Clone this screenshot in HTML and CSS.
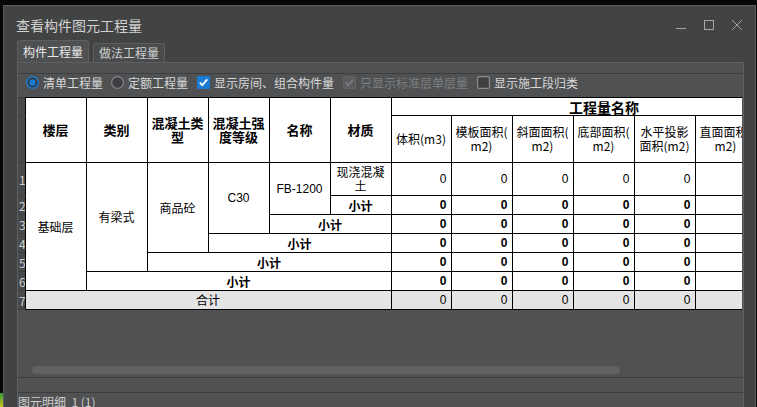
FILE: index.html
```html
<!DOCTYPE html>
<html lang="zh-CN">
<head>
<meta charset="utf-8">
<title>查看构件图元工程量</title>
<link rel="stylesheet" href="styles.css">
</head>
<body>
<div class="window">
  <div class="titlebar">
    <span class="title">查看构件图元工程量</span>
    <div class="controls">
      <svg class="ctl" width="10" height="10" viewBox="0 0 10 10"><line x1="0" y1="8.5" x2="10" y2="8.5"/></svg>
      <svg class="ctl" width="10" height="10" viewBox="0 0 10 10"><rect x="0.5" y="0.5" width="9" height="9"/></svg>
      <svg class="ctl" width="10" height="10" viewBox="0 0 10 10"><line x1="0" y1="0" x2="10" y2="10"/><line x1="10" y1="0" x2="0" y2="10"/></svg>
    </div>
  </div>
  <div class="tabs">
    <div class="tab active">构件工程量</div>
    <div class="tab">做法工程量</div>
  </div>
  <div class="panel">
    <div class="group">
      <div class="toolbar">
        <label class="opt">
          <svg width="13" height="13" viewBox="0 0 13 13"><circle cx="6.5" cy="6.5" r="5.75" fill="#35373a" stroke="#1a7bd4" stroke-width="1.5"/><circle cx="6.5" cy="6.5" r="3.2" fill="#1a7bd4"/></svg>
          <span>清单工程量</span>
        </label>
        <label class="opt">
          <svg width="13" height="13" viewBox="0 0 13 13"><circle cx="6.5" cy="6.5" r="5.9" fill="#3c3e40" stroke="#85878a" stroke-width="1.2"/></svg>
          <span>定额工程量</span>
        </label>
        <label class="opt">
          <svg width="13" height="13" viewBox="0 0 13 13"><rect x="0" y="0" width="13" height="13" rx="1" fill="#1a7ad4"/><path d="M2.8 6.6 L5.3 9.2 L10.2 3.4" fill="none" stroke="#fff" stroke-width="1.8"/></svg>
          <span>显示房间、组合构件量</span>
        </label>
        <label class="opt disabled">
          <svg width="13" height="13" viewBox="0 0 13 13"><rect x="0.5" y="0.5" width="12" height="12" rx="1" fill="#5a5c5e" stroke="#626466"/><path d="M2.8 6.6 L5.3 9.2 L10.2 3.4" fill="none" stroke="#7c7e80" stroke-width="1.6"/></svg>
          <span>只显示标准层单层量</span>
        </label>
        <label class="opt">
          <svg width="13" height="13" viewBox="0 0 13 13"><rect x="0.6" y="0.6" width="11.8" height="11.8" rx="1.5" fill="#3e4042" stroke="#8a8c8e" stroke-width="1.2"/></svg>
          <span>显示施工段归类</span>
        </label>
      </div>
      <div class="grid-area">
        <table class="qty">
          <colgroup>
            <col class="c-rn">
            <col class="c61"><col class="c61"><col class="c61"><col class="c61"><col class="c61"><col class="c61">
            <col class="c60">
            <col class="c61"><col class="c61"><col class="c61"><col class="c61"><col class="c61"><col class="c61">
          </colgroup>
          <tr class="h1">
            <td class="rn"></td>
            <th rowspan="2">楼层</th>
            <th rowspan="2">类别</th>
            <th rowspan="2">混凝土类型</th>
            <th rowspan="2">混凝土强度等级</th>
            <th rowspan="2">名称</th>
            <th rowspan="2">材质</th>
            <th colspan="7" class="grp">工程量名称</th>
          </tr>
          <tr class="h2">
            <td class="rn"></td>
            <th class="sub">体积(m3)</th>
            <th class="sub">模板面积(<br>m2)</th>
            <th class="sub">斜面面积(<br>m2)</th>
            <th class="sub">底部面积(<br>m2)</th>
            <th class="sub">水平投影<br>面积(m2)</th>
            <th class="sub">直面面积(<br>m2)</th>
            <th class="sub">侧面面积(<br>m2)</th>
          </tr>
          <tr class="r1">
            <td class="rn">1</td>
            <td rowspan="6" class="txt">基础层</td>
            <td rowspan="5" class="txt">有梁式</td>
            <td rowspan="4" class="txt">商品砼</td>
            <td rowspan="3" class="txt lat">C30</td>
            <td rowspan="2" class="txt lat">FB-1200</td>
            <td class="txt mat">现浇混凝土</td>
            <td class="v">0</td><td class="v">0</td><td class="v">0</td><td class="v">0</td><td class="v">0</td><td class="v"></td><td class="v"></td>
          </tr>
          <tr class="r">
            <td class="rn">2</td>
            <td class="sum">小计</td>
            <td class="v b">0</td><td class="v b">0</td><td class="v b">0</td><td class="v b">0</td><td class="v b">0</td><td class="v"></td><td class="v"></td>
          </tr>
          <tr class="r">
            <td class="rn">3</td>
            <td colspan="2" class="sum">小计</td>
            <td class="v b">0</td><td class="v b">0</td><td class="v b">0</td><td class="v b">0</td><td class="v b">0</td><td class="v"></td><td class="v"></td>
          </tr>
          <tr class="r">
            <td class="rn">4</td>
            <td colspan="3" class="sum">小计</td>
            <td class="v b">0</td><td class="v b">0</td><td class="v b">0</td><td class="v b">0</td><td class="v b">0</td><td class="v"></td><td class="v"></td>
          </tr>
          <tr class="r">
            <td class="rn">5</td>
            <td colspan="4" class="sum">小计</td>
            <td class="v b">0</td><td class="v b">0</td><td class="v b">0</td><td class="v b">0</td><td class="v b">0</td><td class="v"></td><td class="v"></td>
          </tr>
          <tr class="r">
            <td class="rn">6</td>
            <td colspan="5" class="sum">小计</td>
            <td class="v b">0</td><td class="v b">0</td><td class="v b">0</td><td class="v b">0</td><td class="v b">0</td><td class="v"></td><td class="v"></td>
          </tr>
          <tr class="r total">
            <td class="rn">7</td>
            <td colspan="6" class="txt">合计</td>
            <td class="v">0</td><td class="v">0</td><td class="v">0</td><td class="v">0</td><td class="v">0</td><td class="v"></td><td class="v"></td>
          </tr>
        </table>
      </div>
      <div class="hscroll"><div class="thumb"></div></div>
    </div>
    <div class="band"></div>
    <div class="detail">图元明细&nbsp;&nbsp;1 (1)</div>
  </div>
</div>
</body>
</html>
```

FILE: styles.css
```css
* { box-sizing: border-box; }
html, body { margin: 0; }
body {
  width: 757px;
  height: 407px;
  overflow: hidden;
  padding: 5px 1px 0 3px;
  background: linear-gradient(#2f9a3a, #c9c21f) 0 393px / 3px 14px no-repeat, #060606;
  font-family: "Noto Sans CJK SC", "Noto Sans", sans-serif;
}
.window {
  height: 430px;
  background: #424444;
  border: 1px solid #5b5d5d;
  border-bottom: none;
  display: flex;
  flex-direction: column;
}
.titlebar {
  height: 34px;
  flex: none;
  display: flex;
  align-items: flex-start;
  padding: 10px 13px 0 12px;
}
.title {
  font-size: 14px;
  line-height: 18px;
  color: #d2d2d2;
}
.controls {
  margin-left: auto;
  margin-top: 4px;
  display: flex;
  gap: 18px;
}
.ctl { display: block; stroke: #a4a6a6; stroke-width: 1; fill: none; }
.tabs {
  height: 22px;
  flex: none;
  display: flex;
  align-items: flex-end;
  gap: 4px;
  padding-left: 13px;
}
.tab {
  width: 72px;
  height: 19px;
  border: 1px solid #5c5e60;
  border-bottom: none;
  border-radius: 3px 3px 0 0;
  background: #494b4d;
  color: #d0d0d0;
  font-size: 12px;
  line-height: 18px;
  text-align: center;
}
.tab.active {
  height: 22px;
  line-height: 21px;
  background: #4e5052;
  color: #e8e8e8;
}
.panel {
  flex: 1;
  margin: 0 11px 0 13px;
  border: 1px solid #5d5f61;
  border-bottom: none;
  background: #4f5153;
  padding-top: 10px;
  display: flex;
  flex-direction: column;
}
.group {
  border-top: 1px solid #3b3d3f;
  border-bottom: 1px solid #3a3c3e;
  display: flex;
  flex-direction: column;
}
.toolbar {
  height: 23px;
  display: flex;
  align-items: flex-start;
  gap: 9px;
  padding: 2px 0 0 8px;
}
.opt {
  display: flex;
  align-items: center;
  gap: 4px;
  font-size: 12px;
  line-height: 13px;
  color: #d8d8d8;
  white-space: nowrap;
}
.opt:first-child { margin-right: -1px; }
.opt svg { display: block; flex: none; }
.opt.disabled { color: #7d7f81; }
.grid-area {
  height: 265px;
  width: 724px;
  overflow: hidden;
}
.qty {
  border-collapse: collapse;
  table-layout: fixed;
  width: 799px;
  color: #000;
}
.c-rn { width: 7px; }
.c61 { width: 61px; }
.c60 { width: 60px; }
.qty th, .qty td {
  border: 1px solid #000;
  padding: 0 3px;
  background: #fff;
  text-align: center;
  vertical-align: middle;
  overflow: hidden;
  white-space: normal;
}
.qty th {
  font-size: 13px;
  line-height: 14px;
  font-weight: bold;
}
.qty th.grp { font-size: 14px; }
.qty th.sub {
  font-weight: normal;
  font-size: 12px;
  line-height: 14px;
  padding: 0;
}
.qty td.rn {
  background: #47494b;
  border: 1px solid #3b3d3f;
  border-left: none;
  border-right: 1px solid #000;
  padding: 0 0 0 1px;
  color: #cfcfcf;
  font-size: 12px;
  text-align: left;
  line-height: 13px;
}
.h1 { height: 18px; }
.h2 { height: 47px; }
.r1 { height: 33px; }
.r { height: 19px; }
.qty td.txt {
  font-size: 12px;
  line-height: 14px;
}
.qty td.lat { font-family: "Liberation Sans", sans-serif; }
.qty td.sum {
  font-size: 12px;
  line-height: 13px;
  font-weight: bold;
}
.qty td.v {
  text-align: right;
  padding: 0 4px 0 0;
  font-family: "Liberation Sans", sans-serif;
  font-size: 12px;
  line-height: 13px;
}
.qty td.v.b { font-weight: bold; }
.qty .total td:not(.rn) { background: #e4e4e4; }
.hscroll {
  height: 15px;
  padding: 4px 0 0 14px;
}
.thumb {
  width: 588px;
  height: 8px;
  border-radius: 4px;
  background: #5f6163;
}
.band { height: 14px; flex: none; }
.detail {
  border-top: 1px solid #3b3d3f;
  padding: 1px 0 0 0;
  font-size: 12px;
  line-height: 15px;
  color: #cdcdcd;
}
```
